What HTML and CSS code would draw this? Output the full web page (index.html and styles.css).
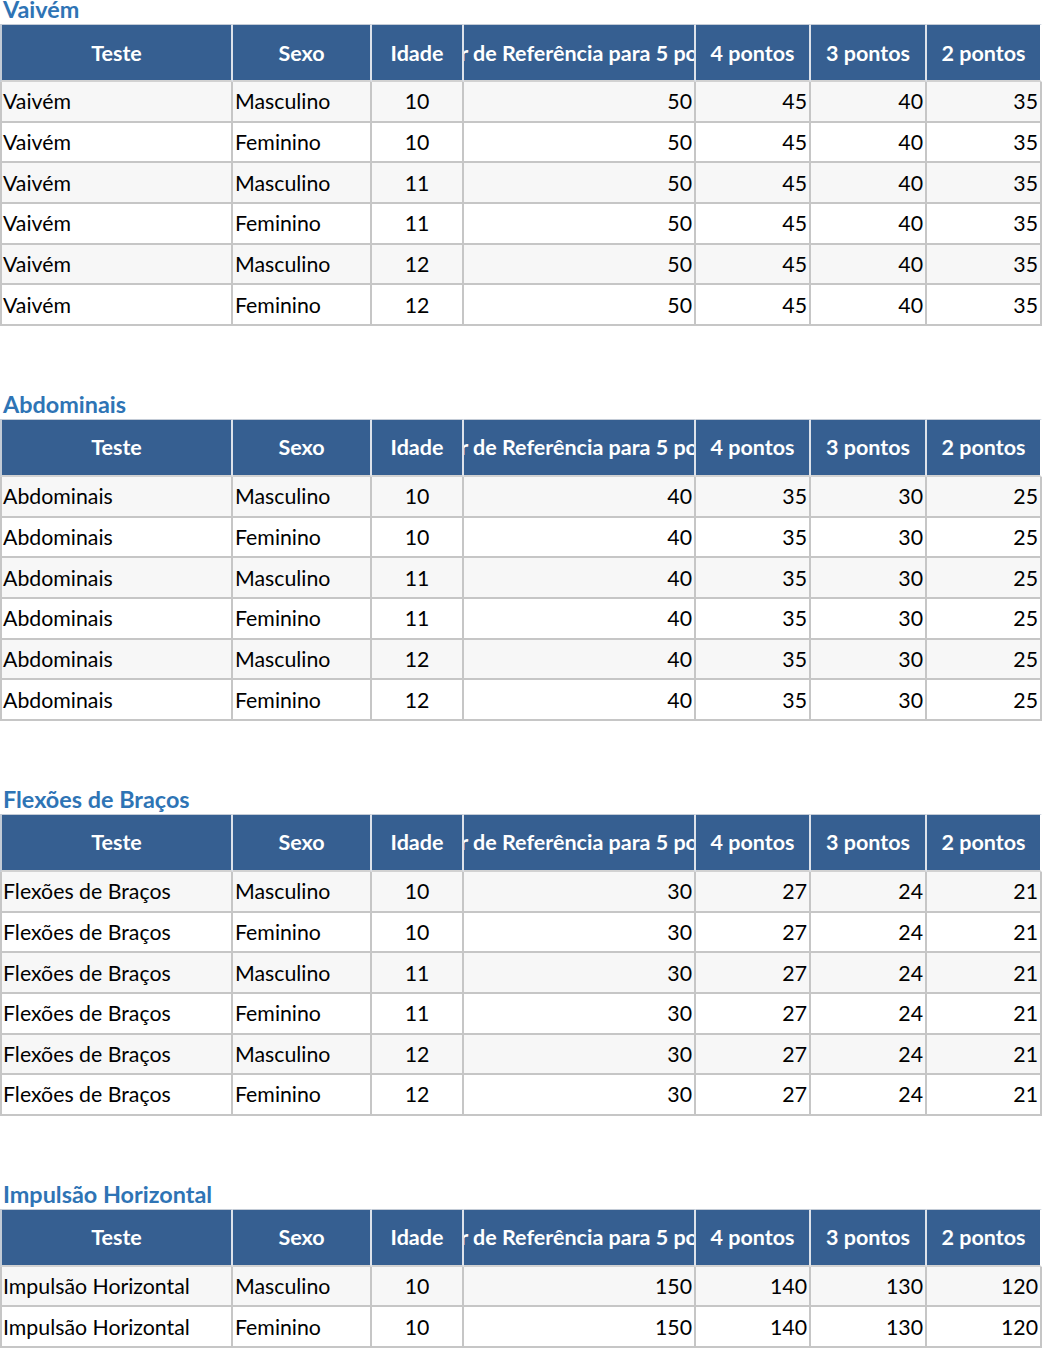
FILE: index.html
```html
<!DOCTYPE html>
<html lang="pt">
<head>
<meta charset="utf-8">
<title>Tabelas de Referência</title>
<link rel="stylesheet" href="styles.css">
</head>
<body>
<main class="sheet">
  <section class="block">
    <h2 class="block-title">Vaivém</h2>
    <div class="grid">
      <div class="hd">Teste</div><div class="hd">Sexo</div><div class="hd">Idade</div><div class="hd"><span>Valor de Referência para 5 pontos</span></div><div class="hd">4 pontos</div><div class="hd">3 pontos</div><div class="hd">2 pontos</div>
      <div class="c t odd">Vaivém</div><div class="c t odd">Masculino</div><div class="c m odd">10</div><div class="c n odd">50</div><div class="c n odd">45</div><div class="c n odd">40</div><div class="c n odd">35</div>
      <div class="c t">Vaivém</div><div class="c t">Feminino</div><div class="c m">10</div><div class="c n">50</div><div class="c n">45</div><div class="c n">40</div><div class="c n">35</div>
      <div class="c t odd">Vaivém</div><div class="c t odd">Masculino</div><div class="c m odd">11</div><div class="c n odd">50</div><div class="c n odd">45</div><div class="c n odd">40</div><div class="c n odd">35</div>
      <div class="c t">Vaivém</div><div class="c t">Feminino</div><div class="c m">11</div><div class="c n">50</div><div class="c n">45</div><div class="c n">40</div><div class="c n">35</div>
      <div class="c t odd">Vaivém</div><div class="c t odd">Masculino</div><div class="c m odd">12</div><div class="c n odd">50</div><div class="c n odd">45</div><div class="c n odd">40</div><div class="c n odd">35</div>
      <div class="c t">Vaivém</div><div class="c t">Feminino</div><div class="c m">12</div><div class="c n">50</div><div class="c n">45</div><div class="c n">40</div><div class="c n">35</div>
    </div>
  </section>
  <section class="block">
    <h2 class="block-title">Abdominais</h2>
    <div class="grid">
      <div class="hd">Teste</div><div class="hd">Sexo</div><div class="hd">Idade</div><div class="hd"><span>Valor de Referência para 5 pontos</span></div><div class="hd">4 pontos</div><div class="hd">3 pontos</div><div class="hd">2 pontos</div>
      <div class="c t odd">Abdominais</div><div class="c t odd">Masculino</div><div class="c m odd">10</div><div class="c n odd">40</div><div class="c n odd">35</div><div class="c n odd">30</div><div class="c n odd">25</div>
      <div class="c t">Abdominais</div><div class="c t">Feminino</div><div class="c m">10</div><div class="c n">40</div><div class="c n">35</div><div class="c n">30</div><div class="c n">25</div>
      <div class="c t odd">Abdominais</div><div class="c t odd">Masculino</div><div class="c m odd">11</div><div class="c n odd">40</div><div class="c n odd">35</div><div class="c n odd">30</div><div class="c n odd">25</div>
      <div class="c t">Abdominais</div><div class="c t">Feminino</div><div class="c m">11</div><div class="c n">40</div><div class="c n">35</div><div class="c n">30</div><div class="c n">25</div>
      <div class="c t odd">Abdominais</div><div class="c t odd">Masculino</div><div class="c m odd">12</div><div class="c n odd">40</div><div class="c n odd">35</div><div class="c n odd">30</div><div class="c n odd">25</div>
      <div class="c t">Abdominais</div><div class="c t">Feminino</div><div class="c m">12</div><div class="c n">40</div><div class="c n">35</div><div class="c n">30</div><div class="c n">25</div>
    </div>
  </section>
  <section class="block">
    <h2 class="block-title">Flexões de Braços</h2>
    <div class="grid">
      <div class="hd">Teste</div><div class="hd">Sexo</div><div class="hd">Idade</div><div class="hd"><span>Valor de Referência para 5 pontos</span></div><div class="hd">4 pontos</div><div class="hd">3 pontos</div><div class="hd">2 pontos</div>
      <div class="c t odd">Flexões de Braços</div><div class="c t odd">Masculino</div><div class="c m odd">10</div><div class="c n odd">30</div><div class="c n odd">27</div><div class="c n odd">24</div><div class="c n odd">21</div>
      <div class="c t">Flexões de Braços</div><div class="c t">Feminino</div><div class="c m">10</div><div class="c n">30</div><div class="c n">27</div><div class="c n">24</div><div class="c n">21</div>
      <div class="c t odd">Flexões de Braços</div><div class="c t odd">Masculino</div><div class="c m odd">11</div><div class="c n odd">30</div><div class="c n odd">27</div><div class="c n odd">24</div><div class="c n odd">21</div>
      <div class="c t">Flexões de Braços</div><div class="c t">Feminino</div><div class="c m">11</div><div class="c n">30</div><div class="c n">27</div><div class="c n">24</div><div class="c n">21</div>
      <div class="c t odd">Flexões de Braços</div><div class="c t odd">Masculino</div><div class="c m odd">12</div><div class="c n odd">30</div><div class="c n odd">27</div><div class="c n odd">24</div><div class="c n odd">21</div>
      <div class="c t">Flexões de Braços</div><div class="c t">Feminino</div><div class="c m">12</div><div class="c n">30</div><div class="c n">27</div><div class="c n">24</div><div class="c n">21</div>
    </div>
  </section>
  <section class="block">
    <h2 class="block-title">Impulsão Horizontal</h2>
    <div class="grid">
      <div class="hd">Teste</div><div class="hd">Sexo</div><div class="hd">Idade</div><div class="hd"><span>Valor de Referência para 5 pontos</span></div><div class="hd">4 pontos</div><div class="hd">3 pontos</div><div class="hd">2 pontos</div>
      <div class="c t odd">Impulsão Horizontal</div><div class="c t odd">Masculino</div><div class="c m odd">10</div><div class="c n odd">150</div><div class="c n odd">140</div><div class="c n odd">130</div><div class="c n odd">120</div>
      <div class="c t">Impulsão Horizontal</div><div class="c t">Feminino</div><div class="c m">10</div><div class="c n">150</div><div class="c n">140</div><div class="c n">130</div><div class="c n">120</div>
    </div>
  </section>
</main>
</body>
</html>
```

FILE: styles.css
```css
html, body {
  margin: 0;
  padding: 0;
  background: #ffffff;
}

body {
  font-family: Lato, "Open Sans", sans-serif;
  color: #000000;
  overflow: hidden;
}

.sheet {
  width: 1043px;
  margin-top: -6px;
}

.block {
  margin-bottom: 63px;
}

.block-title {
  margin: 0;
  padding-left: 3px;
  height: 30px;
  line-height: 30px;
  font-size: 23.4px;
  font-weight: 700;
  color: #2e74b5;
}

.grid {
  display: grid;
  grid-template-columns: 233px 139px 92px 232px 115px 116px 115px;
  width: 1042px;
}

.hd {
  box-sizing: border-box;
  height: 58px;
  background: #365f91;
  border-top: 1px solid #c3cbd6;
  border-right: 2px solid #dde2ea;
  border-bottom: 2px solid #d2d2d2;
  color: #ffffff;
  font-weight: 700;
  font-size: 21.5px;
  display: flex;
  align-items: center;
  justify-content: center;
  overflow: hidden;
  white-space: nowrap;
}

.hd:first-child {
  border-left: 2px solid #c3cbd6;
}

.hd:nth-child(7) {
  border-right: 2px solid #ffffff;
}

.hd span {
  flex: none;
}

.c {
  box-sizing: border-box;
  height: 40.67px;
  border-right: 2px solid #c6c6c6;
  border-bottom: 2px solid #c6c6c6;
  font-size: 21.3px;
  display: flex;
  align-items: center;
  padding: 0 2px;
  white-space: nowrap;
  overflow: hidden;
  background: #ffffff;
}

.c.odd {
  background: #f7f7f7;
}

.grid > .c:nth-child(7n+1) {
  border-left: 2px solid #c6c6c6;
  padding-left: 1px;
}

.c.t {
  justify-content: flex-start;
}

.c.m {
  justify-content: center;
}

.c.n {
  justify-content: flex-end;
}
```
